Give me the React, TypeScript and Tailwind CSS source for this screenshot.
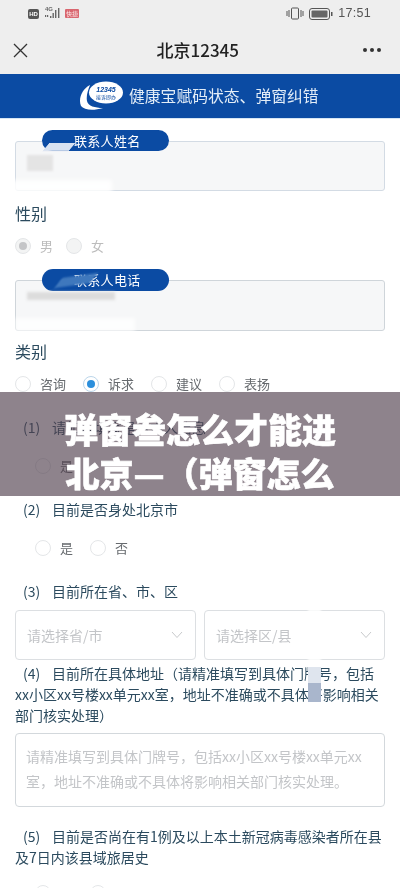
import React from "react";

const font = { fontFamily: '"Noto Sans CJK SC","Liberation Sans",sans-serif' };

function Radio({ label, on, muted }: { label: string; on?: boolean; muted?: boolean }) {
  return (
    <div className="flex items-center gap-[9px]">
      <span className={`w-4 h-4 rounded-full border flex items-center justify-center ${on && !muted ? "border-[#bcd6ea]" : "border-[#e4e6e8]"} ${muted ? "bg-[#f3f4f4]" : "bg-white"}`}>
        {on && <span className={`w-2 h-2 rounded-full ${muted ? "bg-[#c4c5c7]" : "bg-[#2b8fdc]"}`} />}
      </span>
      <span className={`text-[13px] leading-4 ${muted ? "text-[#bcbcbc]" : "text-[#666a6e]"}`}>{label}</span>
    </div>
  );
}

function Pill({ label, h = "h-[21px] leading-[21px]" }: { label: string; h?: string }) {
  return (
    <div className={`absolute left-[42px] top-[-11px] w-[127px] rounded-full bg-[#0b4ba3] text-white text-[13px] tracking-[0.3px] pl-[32px] ${h}`}>
      {label}
    </div>
  );
}

function Select({ label }: { label: string }) {
  return (
    <div className="flex-1 h-[50px] rounded-[4px] border border-[#dcdfe2] flex items-center justify-between pl-[11px] pr-[12px]">
      <span className="text-[14px] text-[#c3c5c8]">{label}</span>
      <svg width="12" height="8" viewBox="0 0 12 8" fill="none" stroke="#c8cacc" strokeWidth="1">
        <path d="M1 1l5 5.5L11 1" />
      </svg>
    </div>
  );
}

function Num({ n }: { n: number }) {
  return <span className="inline-block w-[37px] pl-[8px]">({n})</span>;
}

function Question({ children, cls = "" }: { children: React.ReactNode; cls?: string }) {
  return <div className={`text-[14px] leading-[21px] text-[#2b4a5e] ${cls}`}>{children}</div>;
}

export default function App() {
  return (
    <div style={font} className="relative w-[400px] h-[888px] overflow-hidden bg-white blur-[0.3px]">
      {/* status bar */}
      <div className="h-[26px] bg-[#eeeeee] flex items-center justify-between pl-[28px] pr-[29px] pt-[1px]">
        <div className="flex items-center gap-[3px]">
          <span className="w-[11px] h-[10px] rounded-[2px] bg-[#555] text-white text-[6px] leading-[10px] text-center font-bold" style={{ fontFamily: '"Liberation Sans",sans-serif' }}>HD</span>
          <div className="relative w-[20px] h-[13px]">
            <span className="absolute left-[3px] top-[-1px] text-[6px] leading-[7px] text-[#666] font-bold" style={{ fontFamily: '"Liberation Sans",sans-serif' }}>4G</span>
            <svg className="absolute left-0 top-0" width="20" height="13" viewBox="0 0 20 13" fill="#666">
              <rect x="3" y="8" width="1.2" height="2" /><rect x="5" y="8" width="1.2" height="2" />
              <rect x="8" y="9" width="1.4" height="2" /><rect x="10.5" y="6" width="1.4" height="5" />
              <rect x="13" y="3" width="1.4" height="8" /><rect x="16" y="1" width="1.4" height="10" />
            </svg>
          </div>
          <span className="w-[14px] h-[9px] rounded-[1px] bg-[#d9666f] text-[#fbe8e8] text-[6px] leading-[9px] text-center">快捷</span>
        </div>
        <div className="flex items-center gap-[5px] text-[#555]">
          <svg width="18" height="13" viewBox="0 0 18 13" fill="none" stroke="#555" strokeWidth="1">
            <rect x="5.5" y="1" width="7" height="11" rx="1" />
            <path d="M1 4v5M3 3v7M15 3v7M17 4v5" />
          </svg>
          <svg width="24" height="12" viewBox="0 0 24 12" fill="none">
            <rect x="0.5" y="0.5" width="20" height="11" rx="2.5" stroke="#555" />
            <rect x="2.5" y="2.5" width="16" height="7" rx="1" fill="#666" />
            <rect x="22" y="4" width="1.5" height="4" fill="#555" />
          </svg>
          <span className="text-[12.5px] leading-none tracking-[0.3px]" style={{ fontFamily: '"Liberation Sans",sans-serif' }}>17:51</span>
        </div>
      </div>
      {/* header */}
      <div className="h-[48px] bg-[#eeeeee] flex items-center justify-between pl-[13px] pr-[19px]">
        <svg width="15" height="15" viewBox="0 0 15 15" stroke="#333" strokeWidth="1.3" fill="none">
          <path d="M1 1l13 13M14 1L1 14" />
        </svg>
        <span className="text-[17px] font-medium text-[#222] ml-[4px]">北京12345</span>
        <div className="flex gap-[3.5px]">
          <span className="w-[3.5px] h-[3.5px] rounded-full bg-[#333]" />
          <span className="w-[3.5px] h-[3.5px] rounded-full bg-[#333]" />
          <span className="w-[3.5px] h-[3.5px] rounded-full bg-[#333]" />
        </div>
      </div>
      {/* blue banner */}
      <div className="h-[45px] bg-[#0b4ba3] flex items-center pl-[79px] gap-[4px] border-b border-[#d6e6f4]">
        <svg width="46" height="30" viewBox="0 0 46 30">
          <path d="M11 4C3 8-1 18 2 25c3 4 12 5 22 2-8 0-15-2-16-7-1-5 1-11 3-16z" fill="#fff" />
          <ellipse cx="27" cy="11.5" rx="17" ry="11" fill="#fff" />
          <text x="27" y="11" textAnchor="middle" fontSize="7" fontWeight="700" fontStyle="italic" fill="#0b4ba3" fontFamily="Liberation Sans">12345</text>
          <text x="27" y="18" textAnchor="middle" fontSize="5" fill="#0b4ba3">接诉即办</text>
        </svg>
        <span className="text-[15.8px] text-[#e3edf7]">健康宝赋码状态、弹窗纠错</span>
      </div>

      {/* form */}
      <div className="relative pt-[22px]">
        <div className="relative">
          <Pill label="联系人姓名" />
          <div className="mx-[15px] h-[50px] rounded-[3px] border border-[#d3dbe4] bg-[#f6f7f8]" />
          <div className="absolute left-[27px] top-[14px] w-[26px] h-[16px] bg-[#e4e4e4] blur-[1px]" />
          <div className="absolute left-[46px] top-[2px] w-[26px] h-[8px] -skew-x-[40deg] bg-[#d8e2f1] blur-[0.5px]" />
          <div className="absolute left-[12px] top-[39px] w-[100px] h-[13px] bg-white/90 blur-[2px]" />
        </div>
        <div className="mx-[15px] mt-[10px] text-[16px] leading-6 text-[#2b4a5e]">性别</div>
        <div className="mx-[15px] mt-[13px] flex gap-[13px]">
          <Radio label="男" on muted />
          <Radio label="女" muted />
        </div>
        <div className="relative mt-[26px]">
          <Pill label="联系人电话" h="h-[22px] leading-[22px]" />
          <div className="mx-[15px] h-[51px] rounded-[3px] border border-[#cfd5da] bg-[#f6f7f8]" />
          <div className="absolute left-[27px] top-[12px] w-[88px] h-[8px] bg-[#dcdcdc] blur-[1.5px]" />
          <div className="absolute left-[58px] top-[-4px] w-[36px] h-[9px] -skew-x-[45deg] -rotate-[8deg] bg-[#3f78bd] blur-[1px]" />
          <div className="absolute left-[15px] top-[38px] w-[120px] h-[14px] bg-white/80 blur-[2px]" />
        </div>
        <div className="mx-[15px] mt-[8px] text-[16px] leading-6 text-[#2b4a5e]">类别</div>
        <div className="mx-[15px] mt-[13px] flex gap-[17px]">
          <Radio label="咨询" />
          <Radio label="诉求" on />
          <Radio label="建议" />
          <Radio label="表扬" />
        </div>

        <Question cls="mt-[25px] mx-[15px]"><Num n={1} />请如实填写是否本人信息</Question>
        <div className="ml-[35px] mt-[20px]"><Radio label="是" /></div>
        <Question cls="mt-[25px] mx-[15px]"><Num n={2} />目前是否身处北京市</Question>
        <div className="ml-[35px] mt-[20px] flex gap-[17px]">
          <Radio label="是" />
          <Radio label="否" />
        </div>
        <Question cls="mt-[25px] mx-[15px]"><Num n={3} />目前所在省、市、区</Question>
        <div className="relative mx-[15px] mt-[8px] flex gap-[8px]">
          <Select label="请选择省/市" />
          <Select label="请选择区/县" />
          <div className="absolute left-[293px] top-[-4px] w-[13px] h-[58px] bg-white/80 blur-[1px] pointer-events-none" />
        </div>
        <div className="relative">
          <Question cls="mt-[3px] mx-[15px]">
            <Num n={4} />目前所在具体地址（请精准填写到具体门牌号，包括xx小区xx号楼xx单元xx室，地址不准确或不具体将影响相关部门核实处理）
          </Question>
          <div className="absolute left-[308px] top-[4px] w-[13px] h-[16px] bg-[#dfe5ee] blur-[0.5px]" />
          <div className="absolute left-[308px] top-[20px] w-[13px] h-[19px] bg-[#a9b6cc] blur-[0.5px]" />
        </div>
        <div className="mx-[15px] mt-[7px] h-[74px] rounded-[4px] border border-[#d3d8dc] px-[10px] py-[10px] text-[14px] leading-[25px] text-[#c3c5c8]">
          请精准填写到具体门牌号，包括xx小区xx号楼xx单元xx室，地址不准确或不具体将影响相关部门核实处理。
        </div>
        <Question cls="mt-[19px] mx-[15px]">
          <Num n={5} />目前是否尚在有1例及以上本土新冠病毒感染者所在县及7日内该县域旅居史
        </Question>
        <div className="ml-[35px] mt-[17px] flex gap-[17px]">
          <Radio label="是" />
          <Radio label="否" />
        </div>
      </div>

      {/* title overlay */}
      <div className="absolute left-0 right-0 top-[392px] h-[104px] bg-[#51404f]/65 overflow-hidden pt-[14px]">
        <div className="text-[34px] leading-[45px] font-black text-white text-center whitespace-nowrap [-webkit-text-stroke:0.6px_white]">弹窗叁怎么才能进</div>
        <div className="text-[34px] leading-[45px] font-black text-white text-center whitespace-nowrap -mt-[1px] [-webkit-text-stroke:0.6px_white]">北京—（弹窗怎么</div>
      </div>
    </div>
  );
}
